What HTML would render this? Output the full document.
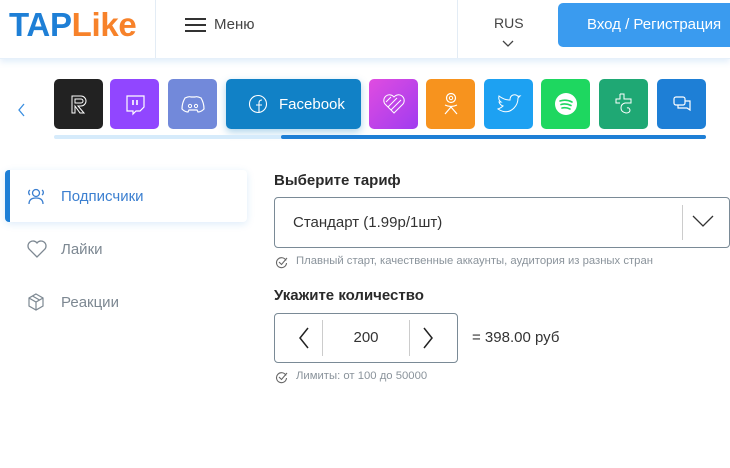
<!DOCTYPE html>
<html><head><meta charset="utf-8"><style>
*{box-sizing:border-box;margin:0;padding:0}
body{width:730px;height:468px;background:#fff;font-family:"Liberation Sans","DejaVu Sans",sans-serif;position:relative;overflow:hidden;color:#222}
.a{position:absolute}
.tile{position:absolute;top:79px;width:49px;height:50px;border-radius:5px;display:flex;align-items:center;justify-content:center}
.nav{position:absolute;left:5px;width:242px;height:52px;display:flex;align-items:center;font-size:15px;color:#7d8892}
.nav svg{position:absolute;left:21px}
.nav span{position:absolute;left:56px}
</style></head><body>
<div class="a" style="left:0;top:0;width:730px;height:59px;box-shadow:0 3px 6px rgba(60,140,220,.15);border-bottom:1px solid #e6f0fa"></div>
<div class="a" style="left:9px;top:6px;font-size:33px;font-weight:bold;letter-spacing:-0.3px"><span style="color:#1e7fd6">TAP</span><span style="color:#f7822a">Like</span></div>
<div class="a" style="left:155px;top:0;width:1px;height:58px;background:#e3ecf5"></div>
<div class="a" style="left:185px;top:18px;width:21px;height:2px;background:#333;box-shadow:0 6px 0 #333,0 12px 0 #333"></div>
<div class="a" style="left:214px;top:16px;font-size:15px;color:#444">Меню</div>
<div class="a" style="left:457px;top:0;width:1px;height:58px;background:#e3ecf5"></div>
<div class="a" style="left:494px;top:15px;font-size:14px;color:#444">RUS</div>
<svg class="a" style="left:502px;top:40px" width="12" height="8"><path d="M1 1l5 5 5-5" stroke="#444" fill="none" stroke-width="1.3"/></svg>
<div class="a" style="left:558px;top:3px;width:180px;height:44px;border-radius:5px;background:#3a9bef;color:#fff;font-size:15px;line-height:44px;padding-left:29px">Вход / Регистрация</div>

<svg class="a" style="left:17px;top:102px" width="10" height="16"><path d="M7 2L2 8l5 6" stroke="#3a8ee0" fill="none" stroke-width="1.3"/></svg>
<div class="tile" style="left:54px;background:#222"><svg width="24" height="24"><path d="M5 4h9a5 5 0 0 1 0 10h-3l6 7h-4l-5-7v7H5zM8 7v4h6a2 2 0 0 0 0-4z" stroke="#fff" fill="none" stroke-width="1"/></svg></div>
<div class="tile" style="left:110px;background:#9146ff"><svg width="24" height="24"><path d="M4 4h17v11l-4 4h-4l-3 3v-3H4z" stroke="#fff" fill="none" stroke-width="1.2"/><path d="M10 8v5M14 8v5" stroke="#fff" stroke-width="1.6"/></svg></div>
<div class="tile" style="left:168px;background:#7289da"><svg width="26" height="20"><path d="M5 4q4-2 6-1h4q2-1 6 1 3 5 3 11-3 3-6 3l-1-2h-8l-1 2q-3 0-6-3 0-6 3-11z" stroke="#fff" fill="none" stroke-width="1.2"/><circle cx="10" cy="12" r="1.6" stroke="#fff" fill="none"/><circle cx="16" cy="12" r="1.6" stroke="#fff" fill="none"/></svg></div>
<div class="tile" style="left:226px;width:135px;background:#1181c6;box-shadow:0 3px 8px rgba(17,129,198,.35);justify-content:flex-start;padding-left:22px"><svg width="20" height="20"><circle cx="10" cy="10" r="8.5" stroke="#fff" fill="none" stroke-width="1.1"/><path d="M11 18v-9q0-3 3-3M8 11h6" stroke="#fff" fill="none" stroke-width="1.1"/></svg><span style="color:#fff;font-size:15px;margin-left:11px">Facebook</span></div>
<div class="tile" style="left:369px;background:linear-gradient(135deg,#e04ce0,#a03cf0)"><svg width="24" height="22"><path d="M12 20L3 11a5 5 0 0 1 9-7 5 5 0 0 1 9 7z" stroke="#fff" fill="none" stroke-width="1"/><path d="M6 14l9-9M9 17l10-10M4 9l5-5" stroke="#fff" stroke-width="1"/></svg></div>
<div class="tile" style="left:426px;background:#f7931e"><svg width="20" height="26"><circle cx="10" cy="7" r="4.5" stroke="#fff" fill="none" stroke-width="1.2"/><circle cx="10" cy="7" r="1.7" stroke="#fff" fill="none"/><path d="M4 14q6 3 12 0M10 16l-6 7M10 16l6 7" stroke="#fff" fill="none" stroke-width="1.2"/></svg></div>
<div class="tile" style="left:484px;background:#1da1f2"><svg width="26" height="22"><path d="M2 16q9 6 16-1 4-4 4-10l2-2-2 .3Q20 1 17 2q-3 1-3 5Q8 7 3 3q-1 4 2 6l-2 0q1 3 4 4-2 2-5 3z" stroke="#fff" fill="none" stroke-width="1"/></svg></div>
<div class="tile" style="left:541px;background:#1ed760"><svg width="24" height="24"><circle cx="12" cy="12" r="11" fill="#fff"/><path d="M6 9q6-2 12 1M7 12.5q5-1.5 10 1M8 16q4-1 8 1" stroke="#1ed760" fill="none" stroke-width="1.6" stroke-linecap="round"/></svg></div>
<div class="tile" style="left:599px;background:#1fa874"><svg width="26" height="26"><path d="M9 3h4v5h7v4h-6q-4 1-4 5t5 5q4 0 4-3-1-3-3-2M9 3v5H5v4h4" stroke="#fff" fill="none" stroke-width="1"/></svg></div>
<div class="tile" style="left:657px;background:#1e7fd6"><svg width="22" height="20"><rect x="3" y="3" width="11" height="8" rx="2" stroke="#fff" fill="none" stroke-width="1.2"/><path d="M7 11v3h9l3 2v-9h-5" stroke="#fff" fill="none" stroke-width="1.2"/></svg></div>
<div class="a" style="left:54px;top:135px;width:652px;height:4px;border-radius:2px;background:#d6ebfb"></div>
<div class="a" style="left:281px;top:135px;width:425px;height:4px;border-radius:2px;background:#1e7fd6"></div>

<div class="nav" style="top:170px;background:#fff;box-shadow:0 2px 8px rgba(30,127,214,.15);border-radius:4px;color:#3b7fd0;border-left:5px solid #1e7fd6">
<svg width="20" height="18" style="left:16px"><circle cx="10" cy="6" r="3.5" stroke="#3b7fd0" fill="none" stroke-width="1.3"/><path d="M3 17q0-6 7-6t7 6M4 3a3 3 0 0 0 0 5M16 3a3 3 0 0 1 0 5" stroke="#3b7fd0" fill="none" stroke-width="1.3"/></svg><span style="left:51px">Подписчики</span></div>
<div class="nav" style="top:223px"><svg width="22" height="20"><path d="M11 18L3 10a4.5 4.5 0 0 1 8-6 4.5 4.5 0 0 1 8 6z" stroke="#7d8892" fill="none" stroke-width="1.3"/></svg><span>Лайки</span></div>
<div class="nav" style="top:276px"><svg width="20" height="20"><path d="M10 2l7 4v8l-7 4-7-4V6zM3 6l7 4 7-4M10 10v8M6.5 4l7 4" stroke="#7d8892" fill="none" stroke-width="1.2"/></svg><span>Реакции</span></div>

<div class="a" style="left:274px;top:172px;font-size:15px;font-weight:bold;color:#2a2a2a">Выберите тариф</div>
<div class="a" style="left:274px;top:197px;width:456px;height:51px;border:1px solid #7a8a96;border-radius:4px"></div>
<div class="a" style="left:293px;top:214px;font-size:15px;color:#333">Стандарт (1.99р/1шт)</div>
<div class="a" style="left:682px;top:205px;width:1px;height:35px;background:#ccc"></div>
<svg class="a" style="left:692px;top:215px" width="22" height="12"><path d="M1 1l10 10 10-10" stroke="#333" fill="none" stroke-width="1.3"/></svg>
<svg class="a" style="left:275px;top:256px" width="13" height="13"><path d="M11 4.5A5 5 0 1 0 11.5 7" stroke="#666" fill="none" stroke-width="1.1"/><path d="M4 6l2.5 2.5L12 2" stroke="#666" fill="none" stroke-width="1.1"/></svg>
<div class="a" style="left:296px;top:255px;font-size:11.3px;color:#8a939b">Плавный старт, качественные аккаунты, аудитория из разных стран</div>
<div class="a" style="left:274px;top:287px;font-size:15px;font-weight:bold;color:#2a2a2a">Укажите количество</div>
<div class="a" style="left:274px;top:313px;width:184px;height:50px;border:1px solid #7a8a96;border-radius:4px"></div>
<div class="a" style="left:322px;top:320px;width:1px;height:36px;background:#ccc"></div>
<div class="a" style="left:409px;top:320px;width:1px;height:36px;background:#ccc"></div>
<svg class="a" style="left:298px;top:327px" width="12" height="22"><path d="M10 1L2 11l8 10" stroke="#222" fill="none" stroke-width="1.5"/></svg>
<svg class="a" style="left:422px;top:327px" width="12" height="22"><path d="M2 1l8 10-8 10" stroke="#222" fill="none" stroke-width="1.5"/></svg>
<div class="a" style="left:323px;top:329px;width:86px;text-align:center;font-size:15px;color:#333">200</div>
<div class="a" style="left:472px;top:329px;font-size:15px;color:#333">= 398.00 руб</div>
<svg class="a" style="left:275px;top:371px" width="13" height="13"><path d="M11 4.5A5 5 0 1 0 11.5 7" stroke="#666" fill="none" stroke-width="1.1"/><path d="M4 6l2.5 2.5L12 2" stroke="#666" fill="none" stroke-width="1.1"/></svg>
<div class="a" style="left:296px;top:370px;font-size:11.3px;color:#8a939b">Лимиты: от 100 до 50000</div>
</body></html>
